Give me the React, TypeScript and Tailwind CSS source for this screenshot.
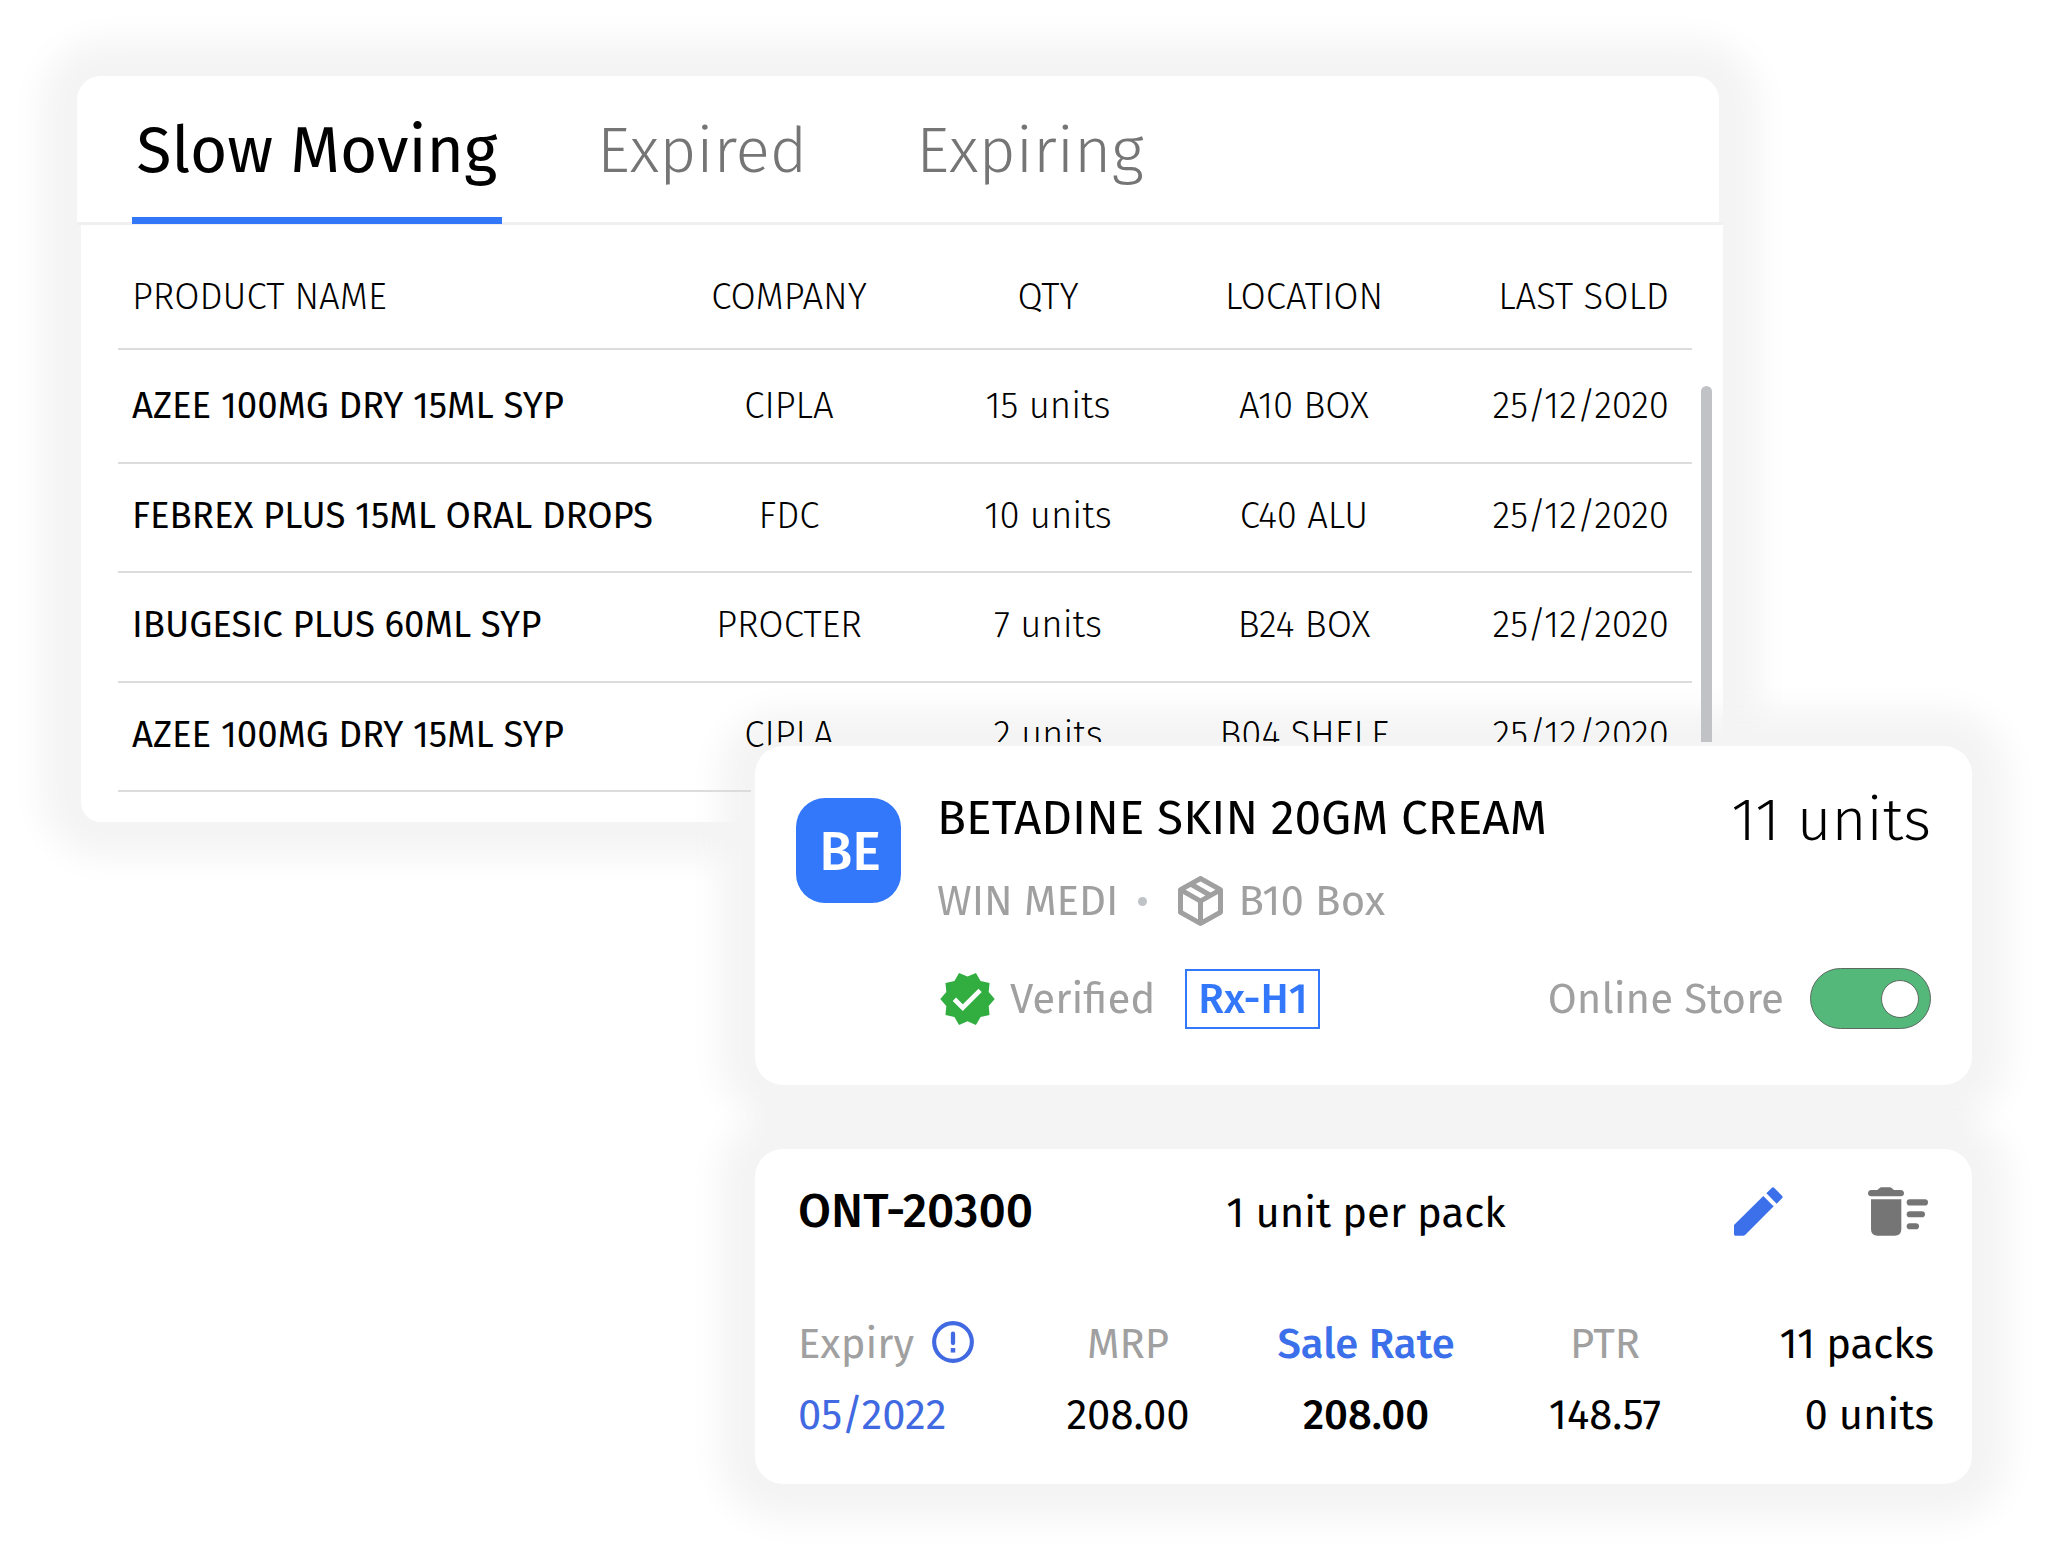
import React from 'react';

type Row = { name: string; company: string; qty: string; location: string; sold: string; box: string };

const rows: Row[] = [
  { name: 'AZEE 100MG DRY 15ML SYP', company: 'CIPLA', qty: '15 units', location: 'A10 BOX', sold: '25/12/2020', box: 'h-[114px]' },
  { name: 'FEBREX PLUS 15ML ORAL DROPS', company: 'FDC', qty: '10 units', location: 'C40 ALU', sold: '25/12/2020', box: 'h-[109px] pb-[3px]' },
  { name: 'IBUGESIC PLUS 60ML SYP', company: 'PROCTER', qty: '7 units', location: 'B24 BOX', sold: '25/12/2020', box: 'h-[110px] pb-1' },
  { name: 'AZEE 100MG DRY 15ML SYP', company: 'CIPLA', qty: '2 units', location: 'B04 SHELF', sold: '25/12/2020', box: 'h-[109px] pb-1' },
];

const columns = 'grid grid-cols-[527px_260px_258px_254px_1fr] items-center border-b-2 border-[#dcdcdc] pl-[14px]';

function Halo() {
  return (
    <div className="pointer-events-none absolute inset-0 rounded-[28px] bg-[#f4f4f4] mix-blend-darken shadow-[0_0_34px_36px_#f4f4f4]" />
  );
}

function TableRow({ row }: { row: Row }) {
  return (
    <div className={`${columns} ${row.box}`}>
      <span className="font-normal">{row.name}</span>
      <span className="text-center">{row.company}</span>
      <span className="text-center">{row.qty}</span>
      <span className="text-center">{row.location}</span>
      <span className="pr-[23px] text-right">{row.sold}</span>
    </div>
  );
}

function StockTable() {
  return (
    <section className="relative ml-[77px] h-[746px] w-[1646px]">
      <Halo />
      <div className="relative">
        <nav className="flex h-[146px] w-[1642px] rounded-t-[24px] bg-white pl-[55px] text-[64px] leading-[149px]">
          <div className="relative w-[370px] text-center text-black">
            Slow Moving
            <div className="absolute left-0 top-[141px] h-[7px] w-full bg-[#3377f9]" />
          </div>
          <div className="ml-[95px] font-light text-[#757575]">Expired</div>
          <div className="ml-[109px] font-light text-[#757575]">Expiring</div>
        </nav>
        <div className="h-[3px] bg-[#f0f0f0]" />
        <div className="ml-1 h-[597px] rounded-b-[20px] bg-white pl-[37px] pr-[31px] text-[36.6px] font-light leading-[44px] text-black">
          <div className={`${columns} h-[125px] pt-5`}>
            <span>PRODUCT NAME</span>
            <span className="text-center">COMPANY</span>
            <span className="text-center">QTY</span>
            <span className="text-center">LOCATION</span>
            <span className="pr-[23px] text-right">LAST SOLD</span>
          </div>
          {rows.map((row, i) => (
            <TableRow key={i} row={row} />
          ))}
        </div>
        <div className="absolute right-[11px] top-[310px] h-[420px] w-[11px] rounded-full bg-[#c1c2c6]" />
      </div>
    </section>
  );
}

function PackageIcon() {
  return (
    <svg className="ml-[31px] h-[50px] w-[45px]" viewBox="3 2 18 20" fill="#a0a0a0">
      <path d="M21,16.5C21,16.88 20.79,17.21 20.47,17.38L12.57,21.82C12.41,21.94 12.21,22 12,22C11.79,22 11.59,21.94 11.43,21.82L3.53,17.38C3.21,17.21 3,16.88 3,16.5V7.5C3,7.12 3.21,6.79 3.53,6.62L11.43,2.18C11.59,2.06 11.79,2 12,2C12.21,2 12.41,2.06 12.57,2.18L20.47,6.62C20.79,6.79 21,7.12 21,7.5V16.5M12,4.15L10.11,5.22L16,8.61L17.96,7.5L12,4.15M6.04,7.5L12,10.85L13.96,9.75L8.08,6.35L6.04,7.5M5,15.91L11,19.29V12.58L5,9.21V15.91M19,15.91V9.21L13,12.58V19.29L19,15.91Z" />
    </svg>
  );
}

function VerifiedIcon() {
  return (
    <svg className="ml-[3px] h-[52px] w-[55px]" viewBox="1 1.5 22 21" fill="#32ae41">
      <path d="M23 12l-2.44-2.79.34-3.69-3.61-.82-1.89-3.2L12 2.96 8.6 1.5 6.71 4.69 3.1 5.5l.34 3.7L1 12l2.44 2.79-.34 3.7 3.61.82L8.6 22.5l3.4-1.47 3.4 1.46 1.89-3.19 3.61-.82-.34-3.69L23 12z" />
      <path d="M6.700 12.100l3.390 3.400 7-7" fill="none" stroke="#fff" strokeWidth="1.900" strokeLinejoin="miter" />
    </svg>
  );
}

function PencilIcon() {
  return (
    <svg className="h-[49px] w-[49px]" viewBox="42 53 147 147" fill="#3b70ea">
      <path d="M42 167L130 80L161 111L76 196Q73 199 69 199H46Q42 199 42 195Z" />
      <path d="M139 72L155 56Q159 52 163 56L186 79Q190 83 186 87L170 103Z" />
    </svg>
  );
}

function DeleteSweepIcon() {
  return (
    <svg className="h-[49px] w-[60px]" viewBox="445 54 180 147" fill="#757575">
      <path d="M455 63H473L480 57Q482 55 485 55H511Q514 55 516 57L523 63H543Q553 64 553 73Q553 82 543 82H455Q445 82 445 73Q445 64 455 63Z" />
      <path d="M454 91H545V180Q545 200 525 200H474Q454 200 454 180Z" />
      <rect x="561" y="91" width="64" height="18.500" rx="9.250" />
      <rect x="561" y="126.500" width="55" height="18.500" rx="9.250" />
      <rect x="561" y="162.500" width="37" height="18.500" rx="9.250" />
    </svg>
  );
}

function AlertIcon() {
  return (
    <svg className="-mt-1 ml-[18px] h-[42px] w-[42px]" viewBox="0 0 43 43" fill="none" stroke="#4169e1" strokeWidth="4.200">
      <circle cx="21.500" cy="21.500" r="19.300" />
      <path d="M21.500 13V22.500" strokeLinecap="round" strokeWidth="4.400" />
      <path d="M19.200 30H23.800" strokeWidth="4.600" />
    </svg>
  );
}

function ProductCard() {
  return (
    <section className="relative h-[339px] w-[1217px]">
      <Halo />
      <div className="relative flex h-full rounded-[28px] bg-white pl-[41px] pr-[41px] pt-[42px] shadow-[0_0_0_4px_#f4f4f4]">
        <div className="mt-[10px] flex h-[105px] w-[105px] items-center justify-center rounded-[29px] bg-[#3377fa] text-[54px] font-medium leading-none text-white">
          <span className="pl-[3px] pt-0.5">BE</span>
        </div>
        <div className="ml-9 flex-1 text-[42px] leading-[60px] text-[#a0a0a0]">
          <div className="flex h-[60px] items-center justify-between text-black">
            <span className="text-[47.8px]">BETADINE SKIN 20GM CREAM</span>
            <span className="pt-1 text-[60px] font-light">11 units</span>
          </div>
          <div className="mt-[23px] flex h-[60px] items-center">
            <span>WIN MEDI</span>
            <span className="ml-5 h-[9px] w-[9px] rounded-full bg-[#bfc2c7]" />
            <PackageIcon />
            <span className="ml-[15px]">B10 Box</span>
          </div>
          <div className="mt-[37px] flex h-[61px] items-center">
            <VerifiedIcon />
            <span className="ml-[15px]">Verified</span>
            <span className="ml-[30px] h-[60px] w-[135px] border-2 border-[#3377fa] text-center font-medium leading-[57px] text-[#3377fa]">
              Rx-H1
            </span>
            <span className="ml-auto">Online Store</span>
            <span className="ml-[26px] flex h-[61px] w-[121px] items-center justify-end rounded-full border border-[#5a6b60] bg-[#54b87a] pr-[11px]">
              <span className="h-[38px] w-[38px] rounded-full border border-[#5a6b60] bg-white" />
            </span>
          </div>
        </div>
      </div>
    </section>
  );
}

function BatchCard() {
  return (
    <section className="relative h-[335px] w-[1217px]">
      <Halo />
      <div className="relative h-full rounded-[28px] bg-white pl-[43px] pr-[38px] pt-[32px] text-[41.8px] leading-[50px] text-black">
        <div className="flex h-[60px] items-center">
          <span className="w-[427px] text-[47.8px] font-medium">ONT-20300</span>
          <span className="w-[282px] pt-1 text-center">1 unit per pack</span>
          <span className="ml-[227px]">
            <PencilIcon />
          </span>
          <span className="ml-[85px]">
            <DeleteSweepIcon />
          </span>
        </div>
        <div className="mt-[78px] grid grid-cols-[211px_238px_238px_240px_1fr] gap-y-[21px] text-center">
          <span className="flex items-center text-[#a0a0a0]">
            Expiry
            <AlertIcon />
          </span>
          <span className="text-[#a0a0a0]">MRP</span>
          <span className="font-medium text-[#3b70ea]">Sale Rate</span>
          <span className="text-[#a0a0a0]">PTR</span>
          <span className="text-right">11 packs</span>
          <span className="text-left text-[#4169e1]">05/2022</span>
          <span>208.00</span>
          <span className="font-medium">208.00</span>
          <span>148.57</span>
          <span className="text-right">0 units</span>
        </div>
      </div>
    </section>
  );
}

export default function App() {
  return (
    <main className="h-[1560px] w-[2048px] overflow-hidden whitespace-nowrap bg-white pt-[76px] font-['Fira_Sans','Noto_Sans',sans-serif]">
      <StockTable />
      <div className="-mt-[76px] ml-[755px] w-[1217px]">
        <ProductCard />
        <div className="mx-5 h-16 bg-[#f4f4f4] shadow-[0_0_20px_14px_#f4f4f4]" />
        <BatchCard />
      </div>
    </main>
  );
}
